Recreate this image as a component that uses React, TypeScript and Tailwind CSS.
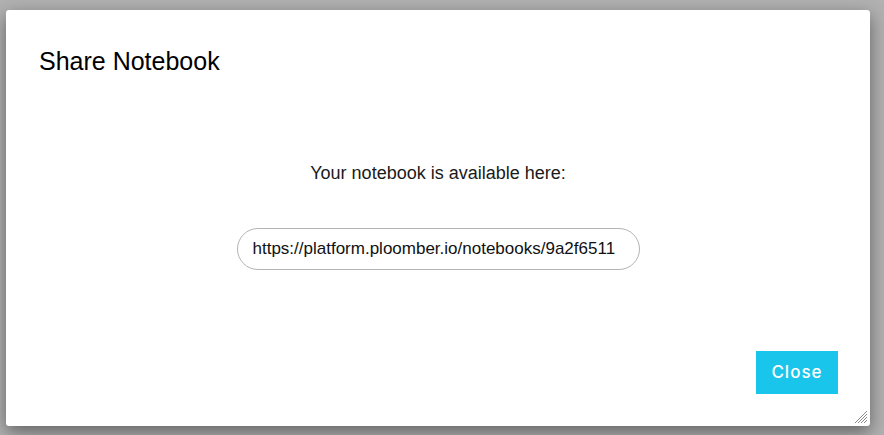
import { useState } from 'react';

function ResizeGrip() {
    return (
        <svg
            className="absolute right-[2px] bottom-[2px]"
            width="14"
            height="14"
            viewBox="0 0 14 14"
            fill="none"
            stroke="#8a8a8a"
            strokeWidth="1"
        >
            <line x1="13" y1="1" x2="1" y2="13" />
            <line x1="13" y1="4" x2="4" y2="13" />
            <line x1="13" y1="7" x2="7" y2="13" />
            <line x1="13" y1="10" x2="10" y2="13" />
        </svg>
    );
}

export default function App() {
    const [url] = useState('https://platform.ploomber.io/notebooks/9a2f6511');

    return (
        <div
            className="w-[884px] h-[435px] bg-[#b1b1b1] pt-[10px] pl-[6px] overflow-hidden"
            style={{ fontFamily: '"Liberation Sans", Arial, sans-serif' }}
        >
            <div className="relative w-[864px] h-[416px] bg-white rounded-[3px] shadow-[0_6px_18px_rgba(0,0,0,0.45)] flex flex-col">
                {/* Header */}
                <div className="pt-[37px] px-[33px]">
                    <h2 className="text-[25px] leading-[29px] text-black">Share Notebook</h2>
                </div>

                {/* Body */}
                <div className="flex flex-col items-center">
                    <p className="mt-[86px] text-[18px] leading-[22px] text-[#1a1a1a]">
                        Your notebook is available here:
                    </p>
                    <input
                        readOnly
                        value={url}
                        className="mt-[44px] w-[403px] h-[42px] rounded-full border border-[#b4b4b4] px-[15px] text-[17px] text-[#111] outline-none"
                    />
                </div>

                {/* Footer */}
                <div className="flex-1 flex items-end justify-end pr-[32px] pb-[32px]">
                    <button
                        className="w-[82px] h-[43px] bg-[#1ac5ec] text-white text-[17px] font-medium tracking-[1px]"
                        style={{ fontFamily: 'Inter, Roboto, sans-serif' }}
                    >
                        Close
                    </button>
                </div>

                <ResizeGrip />
            </div>
        </div>
    );
}
